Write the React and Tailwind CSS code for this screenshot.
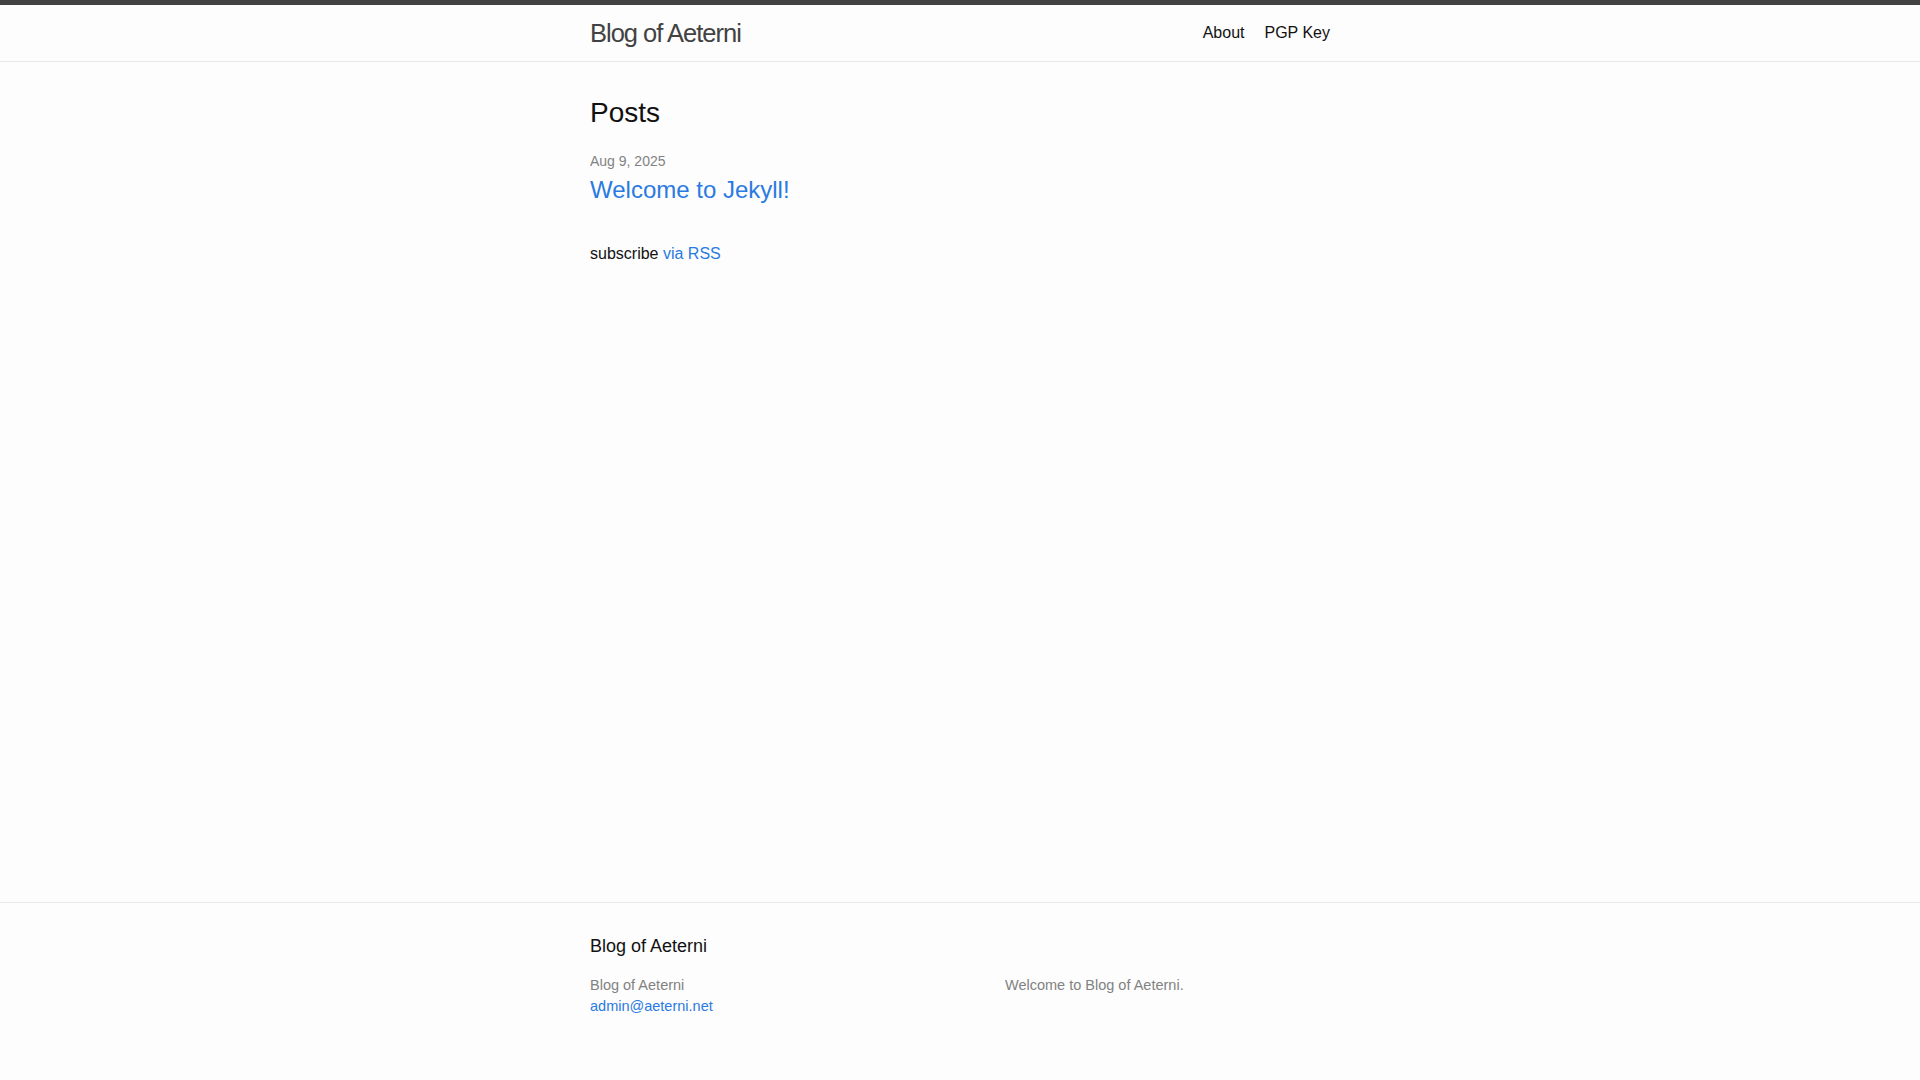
export default function App() {
  return (
    <div
      className="min-h-screen flex flex-col bg-[#fdfdfd] text-[#111] text-[16px] leading-[1.5]"
      style={{ fontFamily: '"Liberation Sans", Helvetica, Arial, sans-serif' }}
    >
      <header className="border-t-[5px] border-t-[#424242] border-b border-b-[#e8e8e8] min-h-[57px]">
        <div className="max-w-[800px] mx-auto px-[30px] flex justify-between items-center">
          <a className="text-[25.5px] leading-[56px] tracking-[-1px] text-[#424242]" href="#">Blog of Aeterni</a>
          <nav className="flex gap-5 leading-[56px]">
            <a href="#">About</a>
            <a href="#">PGP Key</a>
          </nav>
        </div>
      </header>
      <main className="flex-1 py-[30px]">
        <div className="max-w-[800px] mx-auto px-[30px]">
          <h2 className="text-[28px] leading-[1.5] mb-[15px]">Posts</h2>
          <ul className="mb-[34px]">
            <li>
              <span className="text-[14px] text-[#828282]">Aug 9, 2025</span>
              <h3 className="text-[24px] leading-[1.45]">
                <a className="text-[#2a7ae2]" href="#">Welcome to Jekyll!</a>
              </h3>
            </li>
          </ul>
          <p>
            subscribe <a className="text-[#2a7ae2]" href="#">via RSS</a>
          </p>
        </div>
      </main>
      <footer className="border-t border-[#e8e8e8] pt-[30px] pb-[62px]">
        <div className="max-w-[800px] mx-auto px-[30px]">
          <h2 className="text-[18px] mb-[15px]">Blog of Aeterni</h2>
          <div className="flex text-[14.5px] text-[#828282]">
            <div className="w-[415px]">
              <p>Blog of Aeterni</p>
              <a className="text-[#2a7ae2] block" href="#">admin@aeterni.net</a>
            </div>
            <div>
              <p>Welcome to Blog of Aeterni.</p>
            </div>
          </div>
        </div>
      </footer>
    </div>
  );
}
